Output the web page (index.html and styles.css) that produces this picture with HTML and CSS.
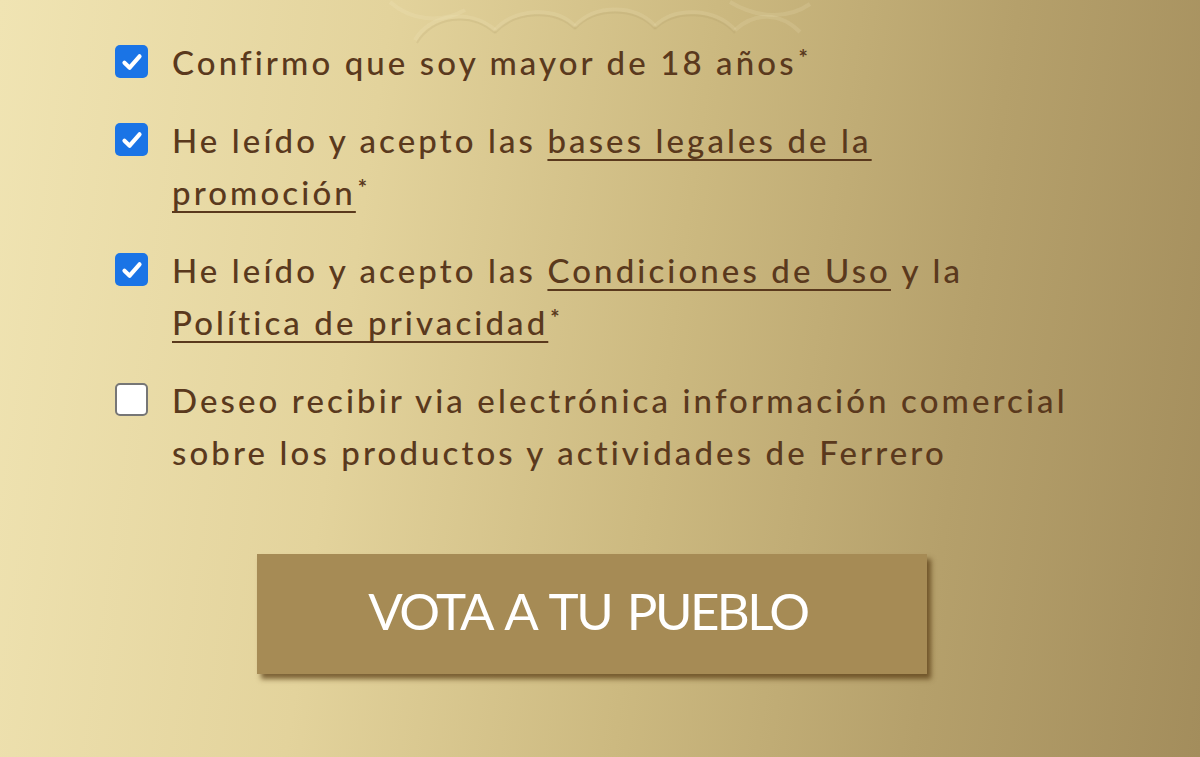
FILE: index.html
```html
<!DOCTYPE html>
<html lang="es">
<head>
<meta charset="utf-8">
<title>Vota a tu pueblo</title>
<link rel="stylesheet" href="styles.css">
</head>
<body>
<main class="page">
  <svg class="ornament" width="460" height="44" viewBox="0 0 460 44" aria-hidden="true">
    <g fill="none" stroke="#fff6d2" stroke-opacity="0.12" stroke-width="4">
      <path d="M20 2 C40 20 70 24 95 10"/>
      <path d="M45 40 C60 14 100 8 125 30"/>
      <path d="M125 30 C145 8 185 6 205 26"/>
      <path d="M205 26 C225 4 265 4 285 26"/>
      <path d="M285 26 C305 6 345 8 365 30"/>
      <path d="M365 30 C385 12 410 12 430 32"/>
      <path d="M360 2 C390 20 420 18 440 4"/>
    </g>
    <g fill="none" stroke="#8a7340" stroke-opacity="0.10" stroke-width="2">
      <path d="M47 43 C62 17 100 11 125 33"/>
      <path d="M125 33 C145 11 185 9 205 29"/>
      <path d="M205 29 C225 7 265 7 285 29"/>
      <path d="M285 29 C305 9 345 11 365 33"/>
    </g>
  </svg>
  <form class="consent">
    <label class="row">
      <span class="box checked"><svg viewBox="0 0 20 20" width="26" height="26"><path d="M4.2 10.6 L8.2 14.4 L15.8 5.6" fill="none" stroke="#fff" stroke-width="3.2" stroke-linecap="round" stroke-linejoin="round"/></svg></span>
      <span class="text">Confirmo que soy mayor de 18 años<sup class="req">*</sup></span>
    </label>
    <label class="row">
      <span class="box checked"><svg viewBox="0 0 20 20" width="26" height="26"><path d="M4.2 10.6 L8.2 14.4 L15.8 5.6" fill="none" stroke="#fff" stroke-width="3.2" stroke-linecap="round" stroke-linejoin="round"/></svg></span>
      <span class="text">He leído y acepto las <a href="#" class="link">bases legales de la<br>promoción</a><sup class="req">*</sup></span>
    </label>
    <label class="row">
      <span class="box checked"><svg viewBox="0 0 20 20" width="26" height="26"><path d="M4.2 10.6 L8.2 14.4 L15.8 5.6" fill="none" stroke="#fff" stroke-width="3.2" stroke-linecap="round" stroke-linejoin="round"/></svg></span>
      <span class="text">He leído y acepto las <a href="#" class="link">Condiciones de Uso</a> y la<br><a href="#" class="link">Política de privacidad</a><sup class="req">*</sup></span>
    </label>
    <label class="row">
      <span class="box"></span>
      <span class="text">Deseo recibir via electrónica información comercial<br>sobre los productos y actividades de Ferrero</span>
    </label>
    <div class="actions">
      <button type="button" class="vote">VOTA A TU PUEBLO</button>
    </div>
  </form>
</main>
</body>
</html>
```
FILE: styles.css
```css
html, body {
  margin: 0;
  padding: 0;
  height: 100%;
}
body {
  background: linear-gradient(98deg, #f0e4b3 0%, #e3d39c 30%, #ccb980 55%, #b5a06b 78%, #a38d5c 100%);
  font-family: "Lato", "Noto Sans", sans-serif;
  color: #5a391d;
  overflow: hidden;
}
.page {
  position: relative;
  height: 757px;
}
.ornament {
  position: absolute;
  left: 370px;
  top: 0;
}
.consent {
  display: flex;
  flex-direction: column;
  gap: 26px;
  padding: 36px 0 0 115px;
  width: 1000px;
}
.row {
  display: flex;
  align-items: flex-start;
  gap: 24px;
  font-size: 33px;
  line-height: 52px;
  letter-spacing: 3.1px;
  font-weight: 500;
}
.box {
  flex: 0 0 auto;
  width: 33px;
  height: 33px;
  margin-top: 9px;
  box-sizing: border-box;
  border-radius: 5px;
  background: #ffffff;
  border: 2px solid #767676;
  display: flex;
  align-items: center;
  justify-content: center;
}
.box.checked {
  background: #1a74e6;
  border: none;
}
.text {
  flex: 1 1 auto;
  white-space: nowrap;
}
.link {
  color: #5a391d;
  text-decoration: underline;
  text-decoration-thickness: 2px;
  text-underline-offset: 6px;
}
.req {
  font-size: 22px;
  font-weight: 700;
  vertical-align: top;
  line-height: 44px;
  margin-left: 2px;
  letter-spacing: 0;
}
.actions {
  display: flex;
  padding: 50px 0 0 142px;
}
.vote {
  width: 670px;
  height: 120px;
  border: none;
  background: #a68b55;
  box-shadow: 4px 5px 5px rgba(90, 60, 20, 0.75);
  color: #ffffff;
  font-family: "Lato", "Noto Sans", sans-serif;
  font-size: 51px;
  font-weight: 400;
  letter-spacing: -2.5px;
  word-spacing: 5px;
  padding: 0 8px 8px 0;
  cursor: pointer;
}
```
